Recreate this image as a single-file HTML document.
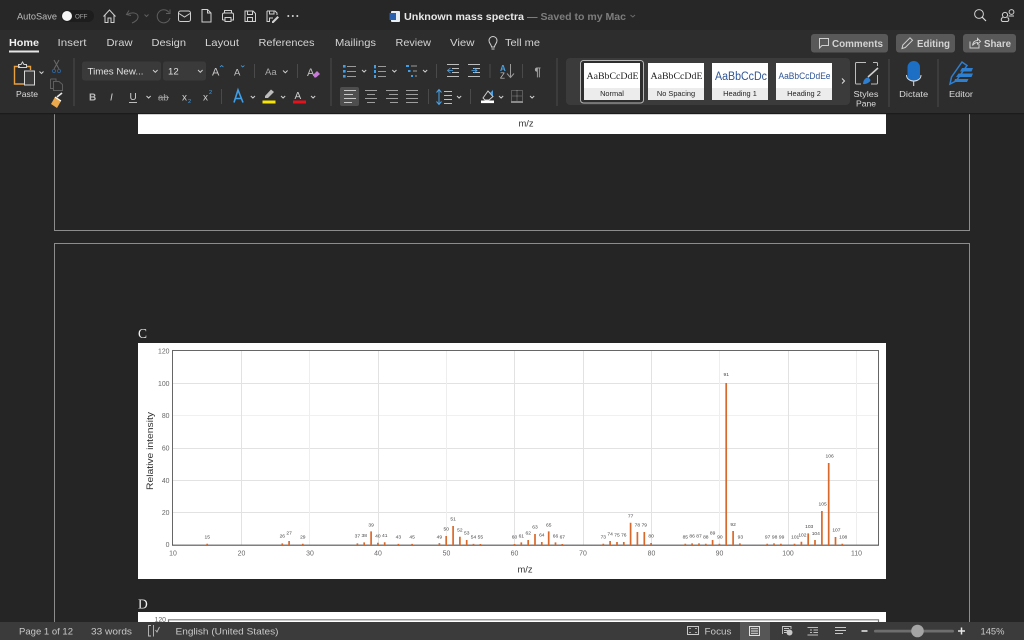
<!DOCTYPE html>
<html><head><meta charset="utf-8"><title>Unknown mass spectra</title>
<style>
html,body{margin:0;padding:0;width:1024px;height:640px;overflow:hidden;background:#252525}
svg{display:block;position:absolute;left:0;top:0}
text{font-family:"Liberation Sans",sans-serif}
.ui{fill:#d8d8d8;font-size:10px}
.tab{fill:#d4d4d4;font-size:10.5px}
.ic{fill:none;stroke:#d0d0d0;stroke-width:1}
.dim{fill:none;stroke:#5e5e5e;stroke-width:1}
.chev{fill:none;stroke:#cfcfcf;stroke-width:1}
.sep{stroke:#4a4a4a;stroke-width:1}
.blue{stroke:#3f9fe8}
.lb text{font-size:4.9px;fill:#444;text-anchor:middle}
.tick text{font-size:6.9px;fill:#666}
.st{font-size:7.4px;fill:#222;text-anchor:middle}
.sb{fill:#c8c8c8;font-size:9.5px}
</style></head><body>
<svg width="1024" height="640" viewBox="0 0 1024 640">
<!-- chrome backgrounds -->
<rect width="1024" height="640" fill="#252525"/>

<!-- document pages -->
<path d="M54.5 114V230.5H969.5V114M54.5 622V243.5H969.5V622" fill="none" stroke="#8c8c8c" stroke-width="1"/>
<rect x="138" y="112" width="748" height="22" fill="#fff"/>
<text x="526" y="126.5" font-size="9.4" fill="#333" text-anchor="middle">m/z</text>
<text x="138" y="338" style="font-family:'Liberation Serif',serif" font-size="13.5" fill="#f0f0f0">C</text>
<rect x="138" y="343" width="748" height="236" fill="#fff"/>

<!-- chart C -->
<g stroke="#e2e2e2" stroke-width="1" fill="none">
<path d="M173 383.5H878M173 448.5H878M173 480.5H878M173 512.5H878"/>
<path d="M173 415.5H878" stroke="#f0f0f0"/>
<path d="M241.5 351V545M378.5 351V545M514.5 351V545M583.5 351V545M651.5 351V545M788.5 351V545"/>
<path d="M309.5 351V545M446.5 351V545M719.5 351V545M856.5 351V545" stroke="#eeeeee"/>
</g>
<path d="M172.5 545V350.5H878.5V545" fill="none" stroke="#666" stroke-width="1"/>
<path d="M172 545.2H879" stroke="#555" stroke-width="1.1"/>
<g class="tick" text-anchor="end">
<text x="169.5" y="353.5">120</text><text x="169.5" y="386">100</text><text x="169.5" y="418">80</text><text x="169.5" y="450.5">60</text><text x="169.5" y="483">40</text><text x="169.5" y="515">20</text><text x="169.5" y="547">0</text>
</g>
<g class="tick" text-anchor="middle">
<text x="173" y="555.5">10</text><text x="241.5" y="555.5">20</text><text x="310" y="555.5">30</text><text x="378" y="555.5">40</text><text x="446.5" y="555.5">50</text><text x="514.5" y="555.5">60</text><text x="583" y="555.5">70</text><text x="651.5" y="555.5">80</text><text x="719.5" y="555.5">90</text><text x="788" y="555.5">100</text><text x="856.5" y="555.5">110</text>
</g>
<text x="525" y="572.5" font-size="9.4" fill="#333" text-anchor="middle">m/z</text>
<text transform="translate(153 451) rotate(-90)" font-size="9.2" fill="#333" text-anchor="middle" textLength="78" lengthAdjust="spacingAndGlyphs">Relative intensity</text>

<path fill="none" stroke="#d9692b" stroke-width="1.7" d="M207.2 545v-1.3M282.3 545v-1.6M289.1 545v-4M302.8 545v-1.2M357.4 545v-1.6M364.2 545v-2.6M371.1 545v-13.6M377.9 545v-2.2M384.7 545v-2.8M398.4 545v-1.1M412.1 545v-1.1M439.4 545v-1.9M446.2 545v-9M453.1 545v-19M459.9 545v-8.3M466.7 545v-5M473.5 545v-1.1M480.4 545v-1M514.5 545v-1M521.3 545v-2.6M528.2 545v-5M535 545v-11M541.8 545v-3M548.7 545v-13.6M555.5 545v-2.6M562.3 545v-1M603.3 545v-1.3M610.1 545v-4M617 545v-3M623.8 545v-3M630.6 545v-22.3M637.4 545v-13M644.3 545v-13M651.1 545v-2M685.3 545v-1.3M692.1 545v-1.6M699 545v-1.6M705.8 545v-1.3M712.6 545v-5M719.4 545v-1.3M726.2 545v-162M733.1 545v-14M739.9 545v-1.6M767.2 545v-1.3M774 545v-1.6M780.9 545v-1.3M794.5 545v-1.3M801.4 545v-3.3M808.2 545v-11.6M815 545v-5M821.9 545v-34M828.7 545v-82M835.5 545v-8M842.3 545v-1.3"/>

<g class="lb">
<text x="207.2" y="538.6">15</text><text x="282.3" y="537.6">26</text><text x="289.1" y="534.6">27</text><text x="302.8" y="538.6">29</text><text x="357.4" y="537.6">37</text><text x="364.2" y="537">38</text><text x="371.1" y="526.3">39</text><text x="377.9" y="537.6">40</text><text x="384.7" y="536.8">41</text><text x="398.4" y="538.6">43</text><text x="412.1" y="538.6">45</text>
<text x="439.4" y="538.3">49</text><text x="446.2" y="530.3">50</text><text x="453.1" y="520.6">51</text><text x="459.9" y="531.3">52</text><text x="466.7" y="534.3">53</text><text x="473.5" y="538.6">54</text><text x="480.4" y="538.6">55</text>
<text x="514.5" y="538.6">60</text><text x="521.3" y="537.6">61</text><text x="528.2" y="534.6">62</text><text x="535" y="528.6">63</text><text x="541.8" y="536.6">64</text><text x="548.7" y="526.3">65</text><text x="555.5" y="537.3">66</text><text x="562.3" y="538.3">67</text>
<text x="603.3" y="538.6">73</text><text x="610.1" y="535.6">74</text><text x="617" y="536.3">75</text><text x="623.8" y="536.3">76</text><text x="630.6" y="517.6">77</text><text x="637.4" y="526.6">78</text><text x="644.3" y="526.6">79</text><text x="651.1" y="537.6">80</text>
<text x="685.3" y="538.6">85</text><text x="692.1" y="537.6">86</text><text x="699" y="537.6">87</text><text x="705.8" y="538.6">88</text><text x="712.6" y="534.6">89</text><text x="719.9" y="538.6">90</text><text x="726.2" y="376">91</text><text x="733.1" y="525.9">92</text><text x="740.4" y="538.6">93</text>
<text x="767.6" y="538.6">97</text><text x="774.6" y="538.6">98</text><text x="781.6" y="538.6">99</text><text x="795.2" y="538.6">101</text><text x="802.4" y="536.3">102</text><text x="809.2" y="527.9">103</text><text x="815.8" y="534.9">104</text><text x="822.6" y="505.3">105</text><text x="829.6" y="457.6">106</text><text x="836.4" y="531.3">107</text><text x="843.2" y="538.6">108</text>
</g>

<!-- figure D -->
<text x="138" y="608.5" style="font-family:'Liberation Serif',serif" font-size="13.5" fill="#f0f0f0">D</text>
<rect x="138" y="612" width="748" height="11" fill="#fff"/>
<text x="166" y="622" font-size="6.9" fill="#666" text-anchor="end">120</text>
<path d="M168.5 623V619.8H878.5V623" fill="none" stroke="#777" stroke-width="1.2"/>

<!-- title bar + ribbon -->
<rect width="1024" height="30" fill="#272727"/>
<rect y="30" width="1024" height="83" fill="#2d2d2d"/>
<rect y="113" width="1024" height="1.2" fill="#1b1b1b"/>

<text x="17" y="19.5" font-size="9.2" fill="#bdbdbd" textLength="40" lengthAdjust="spacingAndGlyphs">AutoSave</text>
<rect x="61" y="10" width="33" height="12" rx="6" fill="#1d1d1d"/>
<circle cx="67" cy="16" r="5" fill="#f4f4f4"/>
<text x="75" y="18.3" font-size="6.2" fill="#a8a8a8">OFF</text>

<!-- QAT -->
<path class="ic" d="M103.5 16.5L109.5 10L115.5 16.5M105 15V22.5H108V18H111V22.5H114V15"/>
<path class="dim" d="M129 10.5L126.5 14.5L131 15.5M127 14.5C133 11.5 138.5 13 138 17.5C137.5 20.5 134.5 22 132 23"/>
<path class="dim" d="M144.5 14.5L146.5 16.5L148.5 14.5"/>
<path class="dim" d="M169 12.5A6.5 6.5 0 1 0 170 18M170 9.5V13.5H166"/>
<g class="ic"><rect x="178.5" y="11" width="12" height="10.5" rx="2"/><path d="M179 13.5L184.5 17L190 13.5"/></g>
<path class="ic" d="M202 22V9.5H207.5L211 13V22ZM207.5 9.5V13H211"/>
<path class="ic" stroke-width="1.2" d="M224.5 13V10.5H231.5V13M222.5 20V14.5A1.5 1.5 0 0 1 224 13H232A1.5 1.5 0 0 1 233.5 14.5V20H231M225 20H222.5M225 17.5H231V21.5H225Z"/>
<path class="ic" d="M245 11H253L255.5 13.5V21.5H245ZM247.5 11V14.5H252.5V11M247.5 21.5V17.5H252.5V21.5"/>
<path class="ic" d="M267 11H275L277 13V15M267 11V21.5H270M269.5 11V14H274V11M269.5 21V18H273"/>
<path d="M272 21.5L277.5 16L279 17.5L273.5 23H272Z" fill="#d0d0d0"/>
<g fill="#d8d8d8"><circle cx="288.3" cy="16" r="1"/><circle cx="292.8" cy="16" r="1"/><circle cx="297.3" cy="16" r="1"/></g>

<!-- Title -->
<rect x="391" y="11" width="9" height="11" rx="1" fill="#e8eef6"/>
<rect x="389.5" y="13" width="6.5" height="7" fill="#2a5fae"/>
<text x="404" y="20" font-size="10.5" font-weight="bold" fill="#e8e8e8" textLength="120" lengthAdjust="spacingAndGlyphs">Unknown mass spectra</text>
<text x="527" y="20" font-size="10.5" font-weight="bold" fill="#7d7d7d" textLength="99" lengthAdjust="spacingAndGlyphs">— Saved to my Mac</text>
<path d="M630.5 15L632.8 17L635 15" fill="none" stroke="#6a6a6a"/>

<circle cx="979" cy="14" r="4.4" class="ic" stroke="#e0e0e0"/>
<path d="M982.2 17.2L986 21" stroke="#e0e0e0" stroke-width="1.1"/>
<g class="ic" stroke-width=".9"><circle cx="1005" cy="15" r="2.6"/><circle cx="1011.5" cy="12" r="2.4"/><path d="M1003 17.5C1000.5 18 1001 21 1002.5 21.5H1007.5C1009 21 1009.5 18.5 1007.5 17.5M1008.5 16H1014"/></g>

<!-- Tabs -->
<text x="9" y="46" font-size="10.5" font-weight="bold" fill="#f0f0f0" textLength="30" lengthAdjust="spacingAndGlyphs">Home</text>
<rect x="9" y="50.5" width="30" height="2" fill="#e6e6e6"/>
<text class="tab" x="57.5" y="46" textLength="29" lengthAdjust="spacingAndGlyphs">Insert</text>
<text class="tab" x="106.5" y="46" textLength="26" lengthAdjust="spacingAndGlyphs">Draw</text>
<text class="tab" x="151.5" y="46" textLength="34.5" lengthAdjust="spacingAndGlyphs">Design</text>
<text class="tab" x="205" y="46" textLength="34" lengthAdjust="spacingAndGlyphs">Layout</text>
<text class="tab" x="258.5" y="46" textLength="56" lengthAdjust="spacingAndGlyphs">References</text>
<text class="tab" x="335" y="46" textLength="41" lengthAdjust="spacingAndGlyphs">Mailings</text>
<text class="tab" x="395.5" y="46" textLength="35.5" lengthAdjust="spacingAndGlyphs">Review</text>
<text class="tab" x="450" y="46" textLength="24.5" lengthAdjust="spacingAndGlyphs">View</text>
<text class="tab" x="505" y="46" textLength="35" lengthAdjust="spacingAndGlyphs">Tell me</text>
<path class="ic" d="M491.5 47C491.5 44.5 489 43.5 489 40.5A4 4 0 0 1 497 40.5C497 43.5 494.5 44.5 494.5 47ZM491.5 49H494.5"/>

<!-- Buttons -->
<rect x="811" y="34" width="77" height="18.5" rx="3" fill="#595959"/>
<rect x="896" y="34" width="59" height="18.5" rx="3" fill="#595959"/>
<rect x="963" y="34" width="53" height="18.5" rx="3" fill="#595959"/>
<path class="ic" d="M819.5 38.5H828.5V45.5H822L819.5 48Z"/>
<text x="832" y="47" font-size="9.8" font-weight="bold" fill="#d4d4d4" textLength="51" lengthAdjust="spacingAndGlyphs">Comments</text>
<path class="ic" d="M902 48.5L902.8 45L910 37.8L912.5 40.3L905.3 47.5Z"/>
<text x="917" y="47" font-size="9.8" font-weight="bold" fill="#d4d4d4" textLength="33" lengthAdjust="spacingAndGlyphs">Editing</text>
<path class="ic" d="M970 41.5V48H979V44M972.5 45.5C973 42 975 40.5 977.5 40.5V38.5L980.5 41.5L977.5 44V42.5C975.5 42.5 974 43.5 972.5 45.5Z"/>
<text x="984" y="47" font-size="9.8" font-weight="bold" fill="#d4d4d4" textLength="27" lengthAdjust="spacingAndGlyphs">Share</text>

<!-- Clipboard group -->
<path d="M20 66.5H14.5V84H24" fill="none" stroke="#e8a040" stroke-width="1.4"/>
<path d="M27 66.5H30.5V70" fill="none" stroke="#e8a040" stroke-width="1.4"/>
<path class="ic" d="M18.5 67.5V64.5H21L22.5 62L24 64.5H26.5V67.5Z"/>
<rect x="24.5" y="71" width="10" height="14" fill="#3a3a3a" stroke="#d8d8d8"/>
<path class="chev" d="M39.5 71.5L41.5 73.5L43.5 71.5"/>
<text x="27" y="97" font-size="8.5" fill="#dcdcdc" text-anchor="middle" textLength="22" lengthAdjust="spacingAndGlyphs">Paste</text>
<path d="M54 60L59 69M59 60L54 69" stroke="#6a6a6a" fill="none"/>
<circle cx="54" cy="71" r="1.6" fill="none" stroke="#2f5f96"/><circle cx="59" cy="71" r="1.6" fill="none" stroke="#2f5f96"/>
<path class="dim" d="M50.5 79V88.5H54M50.5 79H56V81M53.5 81.5H59L62.5 84.5V90.5H53.5Z"/>
<path d="M51 104L55 97L61 101L57 108Z" fill="#e9a94c"/>
<path d="M57 97L62 93" stroke="#e8e8e8" stroke-width="1.6"/>
<path d="M55 97L61 101" stroke="#fff" stroke-width="1.2"/>

<path class="sep" d="M74 58V106M331 58V106M557 58V106M889 59V107M938 59V107"/>

<!-- Font controls -->
<rect x="82" y="61.5" width="79" height="19" rx="2.5" fill="#3a3a3a"/>
<rect x="163" y="61.5" width="43" height="19" rx="2.5" fill="#3a3a3a"/>
<text x="87.5" y="74.5" font-size="9.6" fill="#e0e0e0" textLength="56" lengthAdjust="spacingAndGlyphs">Times New...</text>
<path class="chev" d="M153 70L155.3 72.3L157.6 70M198 70L200.3 72.3L202.6 70"/>
<text x="168" y="74.5" font-size="9.6" fill="#e0e0e0">12</text>
<text x="212" y="75.5" font-size="11" fill="#c8c8c8">A</text>
<path d="M220 67L221.7 65.5L223.4 67" stroke="#4aa3e8" fill="none" stroke-width=".8"/>
<text x="234" y="75.5" font-size="9.5" fill="#c8c8c8">A</text>
<path d="M241 65.5L242.7 67L244.4 65.5" stroke="#4aa3e8" fill="none" stroke-width=".8"/>
<path class="sep" d="M254.5 64V78M297.5 64V78M221.5 89V104M436.5 64V78M490 64V78M522.5 64V78M428.5 89V104M470.5 89V104"/>
<text x="265" y="75" font-size="9.5" fill="#a8a8a8">Aa</text>
<path class="chev" d="M283 70.5L285.3 72.8L287.6 70.5"/>
<text x="307" y="76" font-size="11" fill="#c0c0c0">A</text>
<path d="M313 75L317 71L320 74L316 77.5H314.5Z" fill="#c77bd6"/>

<g fill="#cfcfcf">
<text x="89" y="100.5" font-size="10" font-weight="bold" fill="#bdbdbd">B</text>
<text x="110" y="100.5" font-size="10" font-style="italic" fill="#cfcfcf">I</text>
<text x="129.5" y="100" font-size="10" fill="#cfcfcf">U</text>
<rect x="129" y="102" width="8" height=".9"/>
<text x="158" y="100.5" font-size="9.5" fill="#a8a8a8">ab</text>
<path d="M158 97.5H169" stroke="#a8a8a8" stroke-width=".7"/>
<text x="182" y="100.5" font-size="10" fill="#cfcfcf">x</text>
<text x="188" y="103" font-size="5.5" fill="#4aa3e8">2</text>
<text x="203" y="100.5" font-size="10" fill="#cfcfcf">x</text>
<text x="209" y="94" font-size="5.5" fill="#4aa3e8">2</text>
</g>
<path class="chev" d="M146.5 96L148.6 98L150.7 96M250.8 96L252.9 98L255 96M281 96L283.1 98L285.2 96M311 96L313.1 98L315.2 96"/>
<path d="M234 102.5L238 90L243 102.5M235.5 98.5H241" fill="none" stroke="#3f9fe8" stroke-width="1.6"/>
<path d="M265 96L271 89.5L274 92L268 98H265Z" fill="#bdbdbd"/>
<rect x="262.5" y="100.5" width="13" height="3" fill="#f5e500"/>
<text x="294.5" y="99" font-size="10" fill="#d0d0d0">A</text>
<rect x="293" y="100.5" width="13" height="3" fill="#e8101a"/>

<!-- Paragraph row 1 -->
<g fill="#3f9fe8"><rect x="343" y="65" width="2.6" height="2.6"/><rect x="343" y="70" width="2.6" height="2.6"/><rect x="343" y="75" width="2.6" height="2.6"/>
<rect x="374" y="65" width="2" height="3.4"/><rect x="374" y="70" width="2" height="3"/><rect x="374" y="75" width="2" height="3"/>
<rect x="406" y="65" width="3" height="2"/><rect x="408" y="70" width="2.5" height="2"/><rect x="411" y="75" width="2" height="2"/></g>
<path class="ic" stroke="#9a9a9a" style="stroke:#9a9a9a" d="M347 66.5H356M347 71.5H356M347 76.5H356M378 66.5H386M378 71.5H386M378 76.5H386M411 66H417M413 71H417M415 76H417"/>
<path class="chev" d="M362 70L364.1 72L366.2 70M392.3 70L394.4 72L396.5 70M423 70L425.1 72L427.2 70"/>
<path d="M447 64.5H459M452 68.5H459M452 72.5H459M447 76.5H459M468 64.5H480M473 68.5H480M473 72.5H480M468 76.5H480" stroke="#bdbdbd" fill="none"/>
<path d="M450.5 68L447.5 70.5L450.5 73M447.5 70.5H453M474 68L477 70.5L474 73M471.5 70.5H477" stroke="#4aa3e8" fill="none" stroke-width=".8"/>
<text x="500" y="71" font-size="8" font-weight="bold" fill="#4aa3e8">A</text>
<text x="500" y="78.5" font-size="8" fill="#c8c8c8">Z</text>
<path d="M510.5 64V77M507 73.5L510.5 77.5L514 73.5" stroke="#9a9a9a" fill="none"/>
<text x="534.5" y="76" font-size="11.5" font-weight="bold" fill="#a8a8a8">¶</text>

<!-- Paragraph row 2 -->
<rect x="340" y="87" width="19" height="19" rx="2" fill="#4e4e4e"/>
<path d="M344 90.5H356M344 94.5H353M344 98.5H356M344 102.5H352" stroke="#c8c8c8" fill="none"/>
<path d="M365 90.5H377M367 94.5H375M365 98.5H377M367 102.5H375M386 90.5H398M389 94.5H398M386 98.5H398M390 102.5H398M406 90.5H418M406 94.5H418M406 98.5H418M406 102.5H418" stroke="#9e9e9e" fill="none"/>
<path d="M439 90V104M436.5 92.5L439 89.5L441.5 92.5M436.5 101.5L439 104.5L441.5 101.5" stroke="#4aa3e8" fill="none"/>
<path d="M444 91.5H452M444 95.5H452M444 99.5H452M444 103.5H452" stroke="#bdbdbd" fill="none"/>
<path class="chev" d="M457 96L459.1 98L461.2 96M499 96L501.1 98L503.2 96M530 96L532.1 98L534.2 96"/>
<path d="M483 98L488 91L493 96.5L489 100H485Z" fill="none" stroke="#cfcfcf"/>
<path d="M490 93L493 90V96Z" fill="#4aa3e8"/>
<rect x="481" y="100.5" width="13" height="2.6" fill="#fff"/>
<path d="M511.5 90.5H522.5V101.5H511.5ZM517 90.5V101.5M511.5 96H522.5" stroke="#8a8a8a" stroke-dasharray="1 1" fill="none"/>
<rect x="511" y="101" width="12" height="2" fill="#8a8a8a"/>

<!-- Styles gallery -->
<rect x="566" y="58" width="284" height="47" rx="4" fill="#3b3b3b"/>
<rect x="580.5" y="60.5" width="63" height="42.5" rx="3" fill="#2e2e2e" stroke="#b5b5b5"/>
<rect x="584" y="63" width="56" height="37" fill="#fff"/>
<rect x="584" y="88" width="56" height="12" fill="#ececec"/>
<rect x="648" y="63" width="56" height="37" fill="#fff"/>
<rect x="648" y="88" width="56" height="12" fill="#ececec"/>
<rect x="712" y="63" width="56" height="37" fill="#fff"/>
<rect x="712" y="88" width="56" height="12" fill="#ececec"/>
<rect x="776" y="63" width="56" height="37" fill="#fff"/>
<rect x="776" y="88" width="56" height="12" fill="#ececec"/>
<text x="586.5" y="79" style="font-family:'Liberation Serif',serif" font-size="9.2" fill="#222" textLength="52" lengthAdjust="spacingAndGlyphs">AaBbCcDdE</text>
<text x="650.5" y="79" style="font-family:'Liberation Serif',serif" font-size="9.2" fill="#222" textLength="52" lengthAdjust="spacingAndGlyphs">AaBbCcDdE</text>
<text x="715" y="80" font-size="11.5" fill="#2f5597" textLength="52" lengthAdjust="spacingAndGlyphs">AaBbCcDc</text>
<text x="778.5" y="79" font-size="9" fill="#2f5597" textLength="52" lengthAdjust="spacingAndGlyphs">AaBbCcDdEe</text>
<text class="st" x="612" y="96">Normal</text>
<text class="st" x="676" y="96">No Spacing</text>
<text class="st" x="740" y="96">Heading 1</text>
<text class="st" x="804" y="96">Heading 2</text>
<path d="M842 78.5L844.5 81L842 83.5" fill="none" stroke="#e0e0e0"/>

<!-- Styles pane -->
<path d="M866 62.5H856.5A1 1 0 0 0 855.5 63.5V83A1 1 0 0 0 856.5 84H861M871 84H876.5A1 1 0 0 0 877.5 83V75M873 62.5H876.5A1 1 0 0 1 877.5 63.5V66" fill="none" stroke="#bdbdbd"/>
<path d="M868 77L878 68" stroke="#cfcfcf" stroke-width="1.6"/>
<path d="M863 84C863 80 866 77 868.5 77.5L870.5 80C870 82.5 866 84.5 863 84Z" fill="#2f7fd0"/>
<text x="866" y="97" font-size="8.7" fill="#dcdcdc" text-anchor="middle" textLength="25" lengthAdjust="spacingAndGlyphs">Styles</text>
<text x="866" y="106.5" font-size="8.7" fill="#dcdcdc" text-anchor="middle" textLength="20" lengthAdjust="spacingAndGlyphs">Pane</text>
<!-- Dictate -->
<rect x="907.5" y="61" width="12.5" height="21" rx="6.2" fill="#1c6fc4"/>
<path d="M906.5 75C906.5 83 921 83 921 75M913.7 81V86" fill="none" stroke="#dcdcdc"/>
<text x="913.7" y="97" font-size="8.7" fill="#dcdcdc" text-anchor="middle" textLength="29" lengthAdjust="spacingAndGlyphs">Dictate</text>
<!-- Editor -->
<path d="M950 84L951.5 77L962 62L967 65.5L956 81Z" fill="none" stroke="#2f7fd0" stroke-width="1.5"/>
<path d="M962 68H973L971.5 71.5H960ZM958.5 73.5H973L971.5 77H956ZM955 79H968.5L967 82H954Z" fill="#2f7fd0"/>
<text x="961" y="97" font-size="8.7" fill="#dcdcdc" text-anchor="middle" textLength="24" lengthAdjust="spacingAndGlyphs">Editor</text>

<!-- Status bar -->
<rect y="622" width="1024" height="18" fill="#3b3b3b"/>
<text class="sb" x="19" y="634.5" textLength="54" lengthAdjust="spacingAndGlyphs">Page 1 of 12</text>
<text class="sb" x="91" y="634.5" textLength="41" lengthAdjust="spacingAndGlyphs">33 words</text>
<path d="M151 625.5H148.5V636H151M153.5 625V636.5" fill="none" stroke="#bdbdbd" stroke-width=".9"/>
<path d="M155.5 630L157 632L159.5 627" fill="none" stroke="#bdbdbd" stroke-width=".9"/>
<text class="sb" x="175.5" y="634.5" textLength="103" lengthAdjust="spacingAndGlyphs">English (United States)</text>
<rect x="687.5" y="626.5" width="11" height="8" fill="none" stroke="#c8c8c8"/>
<path d="M689.5 629V628.5H691M695 628.5H696.5V629M696.5 632V632.5H695M691 632.5H689.5V632" fill="none" stroke="#c8c8c8" stroke-width=".7"/>
<text class="sb" x="704.5" y="634.5" textLength="27" lengthAdjust="spacingAndGlyphs">Focus</text>
<rect x="740" y="622" width="30" height="18" fill="#565656"/>
<rect x="749.5" y="626.5" width="10" height="9" fill="none" stroke="#e0e0e0"/>
<path d="M751 628.7H758M751 631H758M751 633.3H758" stroke="#e0e0e0" stroke-width=".9"/>
<path d="M782.5 634V626.5H791V629M784 628.5H789M784 630.5H788M784 632.5H786.5" fill="none" stroke="#c8c8c8" stroke-width=".9"/>
<circle cx="789.5" cy="632.5" r="3" fill="#c8c8c8"/>
<path d="M807.5 627.5H818M810 630H812M813.5 630H818M810 632.5H812M813.5 632.5H818M807.5 635H818" stroke="#bdbdbd" fill="none" stroke-width=".9"/>
<path d="M835 627.5H846M835 630.5H846M835 633.5H843" stroke="#c8c8c8" fill="none"/>
<rect x="861.5" y="630.2" width="6" height="1.6" fill="#e0e0e0"/>
<rect x="874" y="629.7" width="80" height="2.8" rx="1.4" fill="#6e6e6e"/>
<circle cx="917.5" cy="631" r="6.3" fill="#a4a4a4"/>
<path d="M958 631H965M961.5 627.5V634.5" stroke="#e8e8e8" stroke-width="1.5"/>
<text class="sb" x="980.5" y="634.5" textLength="24" lengthAdjust="spacingAndGlyphs">145%</text>
</svg>
</body></html>
